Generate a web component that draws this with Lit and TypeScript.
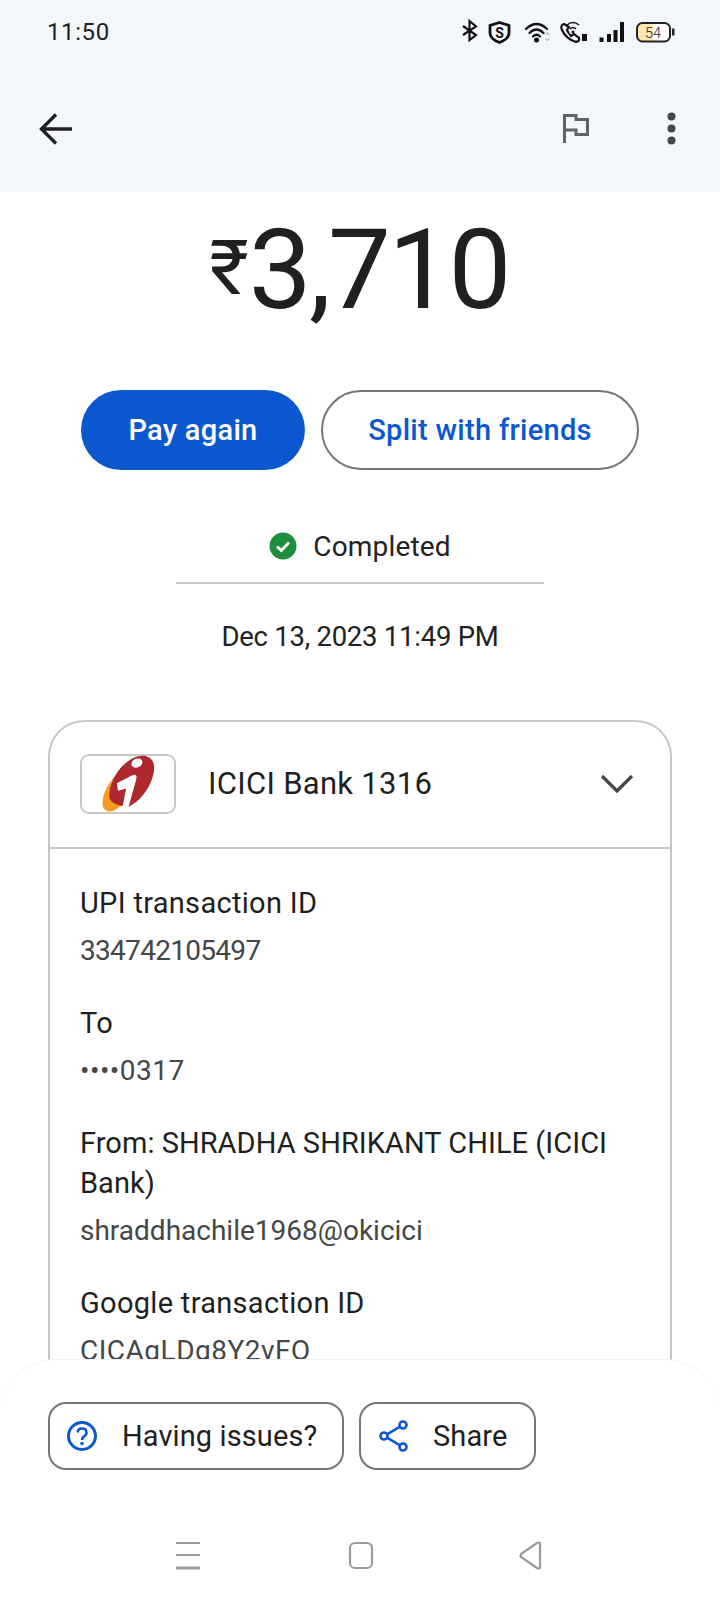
import { LitElement, html, css } from "lit";
import { customElement } from "lit/decorators.js";

@customElement("app-root")
export class AppRoot extends LitElement {
  static styles = css`
    :host { display: block; width: 720px; height: 1600px; font-family: "Roboto", "Inter", sans-serif; color: #1f1f1f; background: #fff; }
    * { box-sizing: border-box; }
    .page { position: relative; width: 720px; height: 1600px; overflow: hidden; background: #fff; }
    .top { height: 192px; background: #f3f6fb; display: flex; flex-direction: column; }
    .status { height: 64px; padding: 5px 40px 0 47px; display: flex; align-items: flex-start; }
    .time { font-size: 24px; line-height: 34px; margin-top: 10px; letter-spacing: 0.6px; color: #222; }
    .status-icons { margin-left: auto; display: block; }
    .appbar { flex: 1; display: flex; align-items: flex-start; }
    .appbar svg { display: block; }
    .back { margin: 49px 0 0 39px; }
    .flag { margin: 50px 0 0 auto; }
    .more { margin: 48px 44px 0 78px; }
    .amount { display: flex; justify-content: center; align-items: flex-start; height: 146px; color: #202020; padding-right: 2px; }
    .rupee { font-size: 76px; line-height: 76px; margin-top: 38px; font-weight: 400; }
    .digits { font-size: 112px; line-height: 146px; font-weight: 400; letter-spacing: -2.8px; margin-top: 5px; }
    .actions { display: flex; gap: 16px; padding: 52px 0 0 81px; }
    .btn { height: 80px; border-radius: 40px; display: flex; align-items: center; justify-content: center; font-size: 29px; font-weight: 500; letter-spacing: 0.3px; }
    .primary { width: 224px; background: #0b57d0; color: #fff; }
    .outline { width: 318px; border: 2px solid #747775; color: #0b57d0; background: #fff; }
    .state { display: flex; align-items: center; justify-content: center; gap: 16px; height: 50px; margin-top: 51px; font-size: 28px; letter-spacing: 0.15px; color: #222; }
    .divider { width: 368px; height: 2px; background: #c4c7c5; margin: 11px auto 0; }
    .date { text-align: center; font-size: 27.5px; letter-spacing: -0.25px; line-height: 40px; margin-top: 33px; color: #222; }
    .card { margin: 63px 48px 0; border: 2px solid #c7c7c7; border-radius: 36px 36px 0 0; border-bottom: 0; height: 800px; }
    .card-head { height: 127px; display: flex; align-items: center; border-bottom: 2px solid #c7c7c7; padding: 0 36px 0 30px; }
    .logo { width: 96px; height: 60px; border: 2px solid #c7c7c7; border-radius: 9px; display: flex; align-items: center; justify-content: center; margin-bottom: 2px; }
    .logo svg { flex: none; }
    .bank { font-size: 31px; margin-left: 32px; margin-bottom: 3px; color: #1f1f1f; letter-spacing: 0.3px; }
    .chev { margin-left: auto; margin-bottom: 2px; }
    .rows { padding: 34px 31px 0 30px; display: flex; flex-direction: column; gap: 32px; }
    .row { display: flex; flex-direction: column; }
    .label { font-size: 29px; letter-spacing: 0.3px; line-height: 40px; color: #1f1f1f; }
    .caps { letter-spacing: 0.05px; }
    .value { font-size: 28px; line-height: 40px; margin-top: 8px; color: #444746; }
    .digitsval { letter-spacing: -0.7px; }
    .mixed { letter-spacing: 0.5px; }
    .sheet { position: absolute; left: 0; right: 0; top: 1359px; height: 241px; background: #fff; border-radius: 56px 56px 0 0; border-top: 1px solid #f0f0f0; display: flex; flex-direction: column; }
    .sheet-actions { display: flex; gap: 15px; padding: 42px 0 0 48px; }
    .chip { height: 68px; border: 2px solid #747775; border-radius: 18px; display: flex; align-items: center; font-size: 29px; letter-spacing: 0.1px; color: #1f1f1f; background: #fff; }
    .issues { width: 296px; padding-left: 16px; gap: 24px; }
    .share { width: 177px; padding-left: 18px; gap: 24px; }
    .nav { display: flex; justify-content: center; margin-top: 70px; }
    .nav svg { display: block; }
  `;

  private statusIcons() {
    return html`<svg class="status-icons" width="240" height="50" viewBox="0 0 240 50" aria-hidden="true">
      <path d="M23 21 L36 30 L29.500 35 V16 L36 21.500 L23 30" fill="none" stroke="#111" stroke-width="2.200"/>
      <path d="M59.500 17.500 L69 20.500 V28 Q69 34 59.500 37.500 Q50 34 50 28 V20.500 Z" fill="none" stroke="#111" stroke-width="2.800"/>
      <text x="59.500" y="32.500" font-family="Roboto, sans-serif" font-size="14" font-weight="700" text-anchor="middle" fill="#111">S</text>
      <g fill="none" stroke="#111" stroke-width="2.300" stroke-linecap="round">
        <path d="M86 24 Q96.500 14 107 24"/>
        <path d="M89.500 28 Q96.500 21 103.500 28"/>
        <path d="M93 31.500 Q96.500 28 100 31.500"/>
      </g>
      <circle cx="96.500" cy="35" r="2.500" fill="#111"/>
      <path d="M105.500 30 l2 -2 l2 2 M105.500 33.500 l2 2 l2 -2" fill="none" stroke="#bbb" stroke-width="1.300"/>
      <path d="M124 19 Q120 20 122 25 Q126 34 136 37 Q140 36 139 33 L134 29 L131 31 Q128 28 127 25 L129 22 Z" fill="none" stroke="#111" stroke-width="2.200"/>
      <g fill="none" stroke="#111" stroke-width="1.600"><path d="M127 20 Q133 15 139 20"/><path d="M130 24 Q133 21 136 24"/></g>
      <circle cx="133" cy="27" r="1.500" fill="#111"/>
      <rect x="142" y="29" width="5" height="7" fill="#111"/>
      <g fill="#111">
        <rect x="159.500" y="32.500" width="4" height="4.500"/>
        <rect x="167" y="29" width="4" height="8"/>
        <rect x="173.500" y="25" width="4" height="12"/>
        <rect x="180" y="17" width="4" height="20"/>
      </g>
      <rect x="197" y="18" width="33" height="18.500" rx="5.500" fill="#fff"/>
      <path d="M202 18 H213 V36.500 H202 Q197 36.500 197 31 V23.500 Q197 18 202 18 Z" fill="#fbe7b2"/>
      <rect x="197" y="18" width="33" height="18.500" rx="5.500" fill="none" stroke="#222" stroke-width="2"/>
      <rect x="232" y="23.500" width="2.500" height="7" fill="#222"/>
      <text x="213" y="33" font-family="Roboto, sans-serif" font-size="14.500" font-weight="300" text-anchor="middle" fill="#222">54</text>
    </svg>`;
  }

  render() {
    const rows = [
      ["UPI transaction ID", "", "334742105497", "digitsval"],
      ["To", "", "••••0317", "mixed"],
      ["From: SHRADHA SHRIKANT CHILE (ICICI Bank)", "caps", "shraddhachile1968@okicici", ""],
      ["Google transaction ID", "", "CICAgLDg8Y2vFQ", "mixed"],
    ];
    return html`<div class="page">
      <header class="top">
        <div class="status"><span class="time">11:50</span>${this.statusIcons()}</div>
        <div class="appbar">
          <svg class="back" width="34" height="32" viewBox="0 0 34 32"><path d="M33 16 H4 M17 1.500 L2.500 16 L17 30.500" fill="none" stroke="#1f1f1f" stroke-width="3.400"/></svg>
          <svg class="flag" width="26" height="29" viewBox="0 0 26 29"><path d="M1.500 29 V1.500 H13 V5.500 H24.500 V20.500 H13 V16 H1.500" fill="none" stroke="#5f6368" stroke-width="3"/></svg>
          <svg class="more" width="9" height="33" viewBox="0 0 9 33"><circle cx="4.500" cy="4.500" r="4" fill="#444746"/><circle cx="4.500" cy="16.500" r="4" fill="#444746"/><circle cx="4.500" cy="28.500" r="4" fill="#444746"/></svg>
        </div>
      </header>
      <div class="amount"><span class="rupee">₹</span><span class="digits">3,710</span></div>
      <div class="actions">
        <div class="btn primary">Pay again</div>
        <div class="btn outline">Split with friends</div>
      </div>
      <div class="state">
        <svg width="28" height="28" viewBox="0 0 28 28"><circle cx="14" cy="14" r="13.500" fill="#1e8e3e"/><path d="M8 14.500 L12.300 18.500 L20 10.500" fill="none" stroke="#fff" stroke-width="2.800"/></svg>
        <span>Completed</span>
      </div>
      <div class="divider"></div>
      <div class="date">Dec 13, 2023 11:49 PM</div>
      <section class="card">
        <div class="card-head">
          <div class="logo">
            <svg width="57" height="58" viewBox="30 16 170 173">
              <path d="M88 66 C55 96 35 135 38 165 C40 185 62 190 78 178 C95 165 105 165 118 170 L110 60 Z" fill="#f79a25"/>
              <path d="M58 130 C62 75 115 15 160 18 C198 22 198 62 180 100 C165 132 145 155 115 170 L85 165 C65 160 56 150 58 130 Z" fill="#ae282e"/>
              <path d="M80 100 L128 76 Q142 72 138 88 L115 172 L95 182 L108 116 L84 123 Z" fill="#fff"/>
              <ellipse cx="140" cy="40" rx="17" ry="13" transform="rotate(-25 140 40)" fill="#fff"/>
            </svg>
          </div>
          <span class="bank">ICICI Bank 1316</span>
          <svg class="chev" width="34" height="20" viewBox="0 0 34 20"><path d="M2 2 L17 17 L32 2" fill="none" stroke="#444746" stroke-width="3.200"/></svg>
        </div>
        <div class="rows">
          ${rows.map(([l, lc, v, c]) => html`<div class="row"><div class="label ${lc}">${l}</div><div class="value ${c}">${v}</div></div>`)}
        </div>
      </section>
      <footer class="sheet">
        <div class="sheet-actions">
          <div class="chip issues">
            <svg width="32" height="32" viewBox="0 0 32 32"><circle cx="16" cy="16" r="13.500" fill="none" stroke="#0b57d0" stroke-width="3"/><path d="M11.500 12.500 Q12 8.500 16 8.500 Q20.500 8.500 20.500 12.500 Q20.500 15 18 16.500 Q16 17.500 16 20" fill="none" stroke="#0b57d0" stroke-width="2.600"/><circle cx="16" cy="23.500" r="1.800" fill="#0b57d0"/></svg>
            <span>Having issues?</span>
          </div>
          <div class="chip share">
            <svg width="30" height="32" viewBox="0 0 30 32"><g fill="none" stroke="#0b57d0" stroke-width="2.600"><circle cx="24" cy="5" r="3.500"/><circle cx="5" cy="16" r="3.500"/><circle cx="24" cy="27" r="3.500"/><path d="M8 14.300 L21 6.700 M8 17.700 L21 25.300"/></g></svg>
            <span>Share</span>
          </div>
        </div>
        <div class="nav">
          <svg width="370" height="40" viewBox="0 0 370 40">
            <g fill="none" stroke="#9a9a9a" stroke-width="2.200">
              <path d="M1 3 H25 M1 15 H25"/>
              <path d="M1 28 H25" stroke-width="3"/>
              <rect x="175" y="3" width="22" height="25" rx="5"/>
              <path d="M365 3 V28 Q364 29 362 28 L346 17 Q345 15.500 346 14 L362 3 Q364 2 365 3 Z"/>
            </g>
          </svg>
        </div>
      </footer>
    </div>`;
  }
}
